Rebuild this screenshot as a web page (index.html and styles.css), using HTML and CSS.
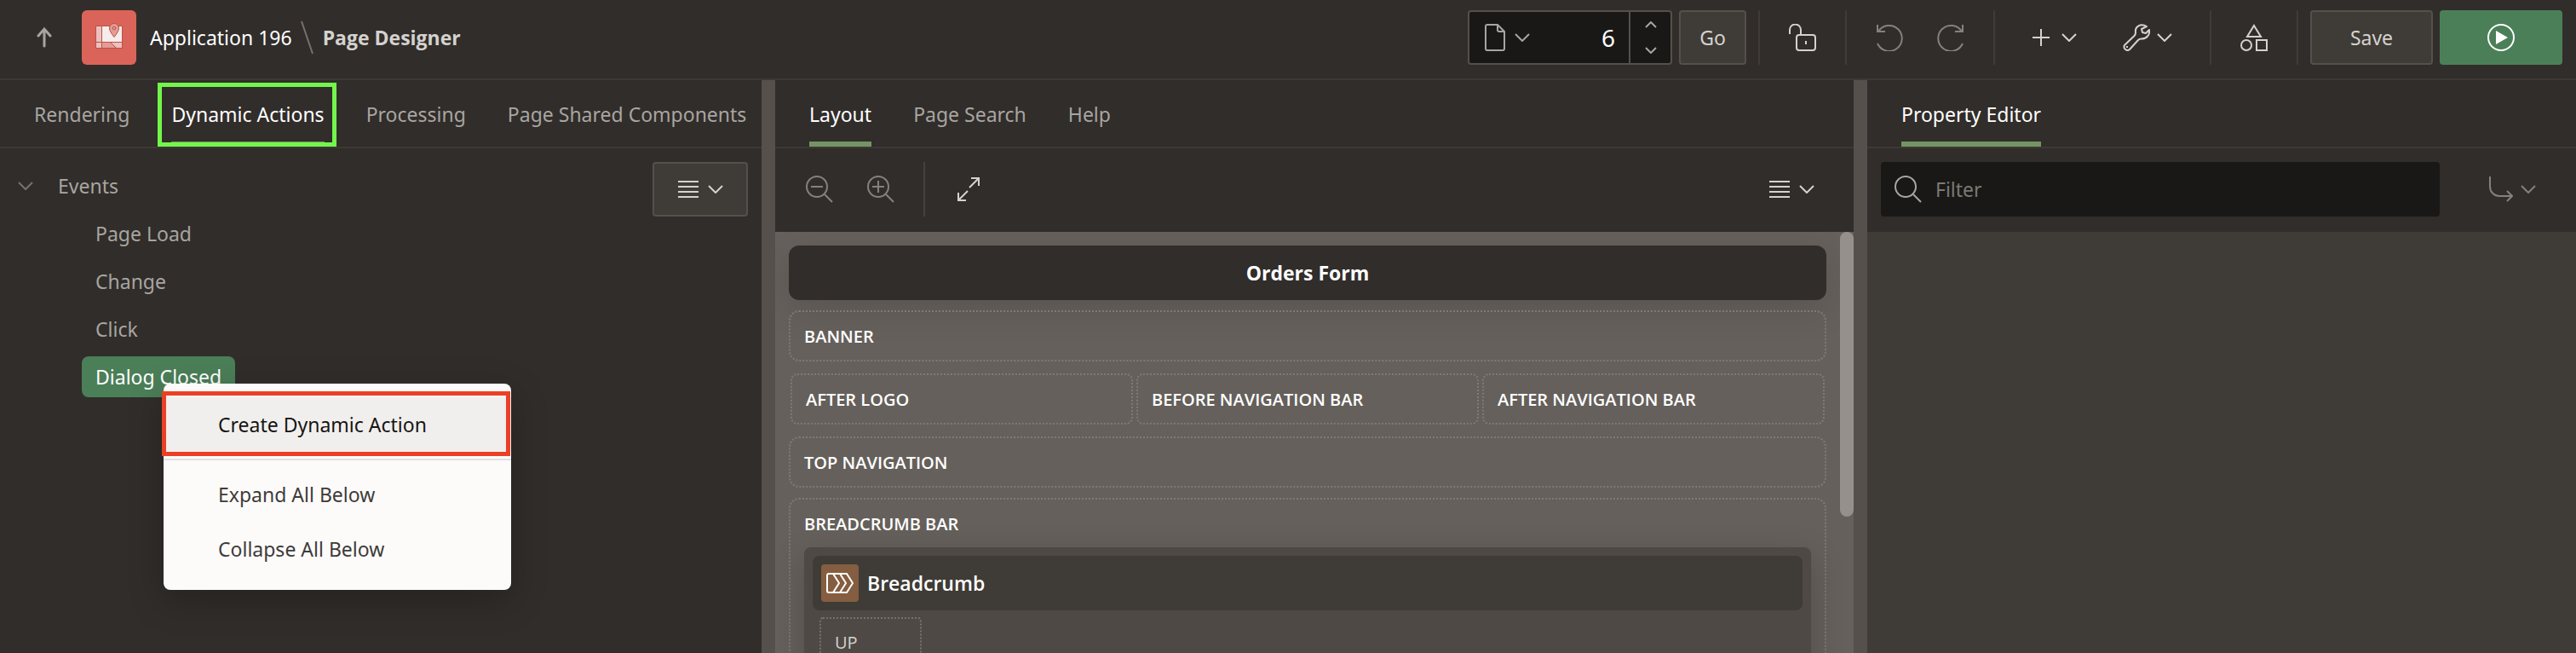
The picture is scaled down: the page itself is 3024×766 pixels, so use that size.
FILE: index.html
```html
<!DOCTYPE html>
<html lang="en">
<head>
<meta charset="utf-8">
<title>Page Designer</title>
<link rel="stylesheet" href="styles.css">
</head>
<body>
<svg class="defs" width="0" height="0" aria-hidden="true">
  <symbol id="chev" viewBox="0 0 18 10"><path d="M1 1l8 8 8-8"/></symbol>
  <symbol id="chev-s" viewBox="0 0 14 8"><path d="M1 1l6 6 6-6"/></symbol>
  <symbol id="chev-up" viewBox="0 0 14 8"><path d="M1 7l6-6 6 6"/></symbol>
  <symbol id="lines" viewBox="0 0 24 20"><path d="M0 1h24M0 7h24M0 13h24M0 19h24"/></symbol>
</svg>

<header class="topbar">
  <nav class="crumbs" aria-label="Breadcrumb">
    <a class="up" href="#" aria-label="Up"><svg class="ic" width="18" height="24" viewBox="0 0 18 24"><path class="bold" d="M9 22V2M2 10l7-8 7 8" stroke-linecap="round"/></svg></a>
    <a class="app" href="#">
      <svg class="app-icon" width="64" height="64" viewBox="0 0 64 64">
        <rect width="64" height="64" rx="6" fill="#da645a"/>
        <rect x="17" y="19" width="30" height="26" fill="#f6eceb"/>
        <rect x="17" y="19" width="6" height="26" fill="#ecc1bd"/>
        <rect x="17" y="38" width="31" height="6" fill="#e39c95"/>
        <path d="M17 38h6v6h-6zM34 38h13v6h-6z" fill="#ecc1bd"/>
        <path d="M17 18.500h30.500v26H16.500v-26zM23.500 18.500v26M16.500 37.500h31M34 38l6 6" fill="none" stroke="#ba524a"/>
        <path d="M38 31.500c-3.500-4.500-5.500-7.500-5.500-10.500a5.500 5.500 0 0 1 11 0c0 3-2 6-5.500 10.500z" fill="#e39c95" stroke="#ba524a"/>
        <circle cx="38" cy="21" r="1.800" fill="none" stroke="#ba524a"/>
      </svg>
      <span>Application 196</span>
    </a>
    <svg class="slash" width="16" height="40" viewBox="0 0 16 40"><path d="M1 1l13 38" stroke-width="2"/></svg>
    <strong class="current">Page Designer</strong>
  </nav>

  <div class="tools">
    <div class="page-pick">
      <button class="file" aria-label="Page list">
        <svg class="ic" width="24" height="32" viewBox="0 0 24 32"><path d="M3 1h12l8 8v20a2 2 0 0 1-2 2H3a2 2 0 0 1-2-2V3a2 2 0 0 1 2-2zM15 1v6a2 2 0 0 0 2 2h6"/></svg>
        <svg class="ic" width="18" height="10"><use href="#chev"/></svg>
      </button>
      <input class="page-no" type="text" value="6" aria-label="Page number">
      <span class="spin">
        <button aria-label="Next page"><svg class="ic" width="14" height="8"><use href="#chev-up"/></svg></button>
        <button aria-label="Previous page"><svg class="ic" width="14" height="8"><use href="#chev-s"/></svg></button>
      </span>
    </div>
    <button class="btn go">Go</button>
    <span class="group"><button class="tool" aria-label="Lock"><svg class="ic" width="32" height="32" viewBox="0 0 32 32"><path d="M1 12V7a6 6 0 0 1 13 0v6"/><rect x="9" y="13" width="22" height="18" rx="3"/><path d="M20 20v4"/></svg></button></span>
    <span class="group dim undo"><button class="tool" aria-label="Undo"><svg class="ic" width="32" height="32" viewBox="0 0 32 32"><path d="M1 1v8h9M2 9A15 15 0 1 1 1 23"/></svg></button>
      <button class="tool" aria-label="Redo"><svg class="ic" width="32" height="32" viewBox="0 0 32 32"><path d="M31 1v8h-9M30 9A15 15 0 1 0 31 23"/></svg></button></span>
    <span class="group make">
      <button class="tool add" aria-label="Create"><svg class="ic" width="20" height="20" viewBox="0 0 20 20"><path d="M10 0v20M0 10h20"/></svg><svg class="ic" width="18" height="10"><use href="#chev"/></svg></button>
      <button class="tool util" aria-label="Utilities"><svg class="ic" width="32" height="32" viewBox="0 0 32 32"><path d="M28 3C21-1 14 3 15 10c0 2-.5 3-1.500 4L2 25a4 4 0 0 0 6 5L18 19c1-1 2-1.500 4-1.500C28 17.500 32 13 31 7l-4 4-4-1-1-4z" stroke-linejoin="round"/><path d="M5 26v2"/></svg><svg class="ic" width="18" height="10"><use href="#chev"/></svg></button>
    </span>
    <span class="group"><button class="tool" aria-label="Shared components"><svg class="ic" width="32" height="32" viewBox="0 0 32 32"><path d="M16 2l8 13H8z"/><circle cx="7" cy="25" r="6"/><rect x="19" y="19" width="12" height="12"/></svg></button></span>
    <span class="group last"><button class="btn wide">Save</button>
      <button class="btn wide run" aria-label="Save and run"><svg class="ic" width="32" height="32" viewBox="0 0 32 32"><circle cx="16" cy="16" r="15"/><path d="M10 8l14 8-14 8z" fill="currentColor" stroke="none"/></svg></button></span>
  </div>
</header>

<main class="panes">
  <section class="pane">
    <nav class="tabs">
      <a href="#">Rendering</a><a class="on marked" href="#">Dynamic Actions</a><a href="#">Processing</a><a href="#">Page Shared Components</a>
    </nav>
    <div class="tree-wrap">
      <ul class="tree">
        <li class="root"><svg class="ic" width="18" height="10"><use href="#chev"/></svg><span>Events</span></li>
        <li><span class="node">Page Load</span></li>
        <li><span class="node">Change</span></li>
        <li><span class="node">Click</span></li>
        <li><span class="node sel">Dialog Closed</span>
          <div class="menu" role="menu">
            <button class="hot" role="menuitem">Create Dynamic Action</button>
            <hr>
            <button role="menuitem">Expand All Below</button>
            <button role="menuitem">Collapse All Below</button>
          </div>
        </li>
      </ul>
      <button class="btn tree-menu" aria-label="Tree menu"><svg class="ic" width="24" height="20"><use href="#lines"/></svg><svg class="ic" width="18" height="10"><use href="#chev"/></svg></button>
    </div>
  </section>

  <div class="splitter"></div>

  <section class="pane">
    <nav class="tabs"><a class="on" href="#">Layout</a><a href="#">Page Search</a><a href="#">Help</a></nav>
    <div class="bar layout-bar">
      <span class="zooms">
        <button class="tool" aria-label="Zoom out"><svg class="ic" width="32" height="32" viewBox="0 0 32 32"><circle cx="13" cy="13" r="12"/><path d="M22 22l9 9M6 13h14"/></svg></button>
        <button class="tool" aria-label="Zoom in"><svg class="ic" width="32" height="32" viewBox="0 0 32 32"><circle cx="13" cy="13" r="12"/><path d="M22 22l9 9M6 13h14M13 6v14"/></svg></button>
      </span>
      <button class="tool expand" aria-label="Expand"><svg class="ic" width="26" height="28" viewBox="0 0 26 28"><path d="M16 1h9v9M25 1L14 12M1 18v9h9M1 27l11-11"/></svg></button>
      <button class="tool layout-menu" aria-label="Layout menu"><svg class="ic" width="24" height="20"><use href="#lines"/></svg><svg class="ic" width="18" height="10"><use href="#chev"/></svg></button>
    </div>
    <div class="canvas">
      <div class="slots">
        <h1 class="page-title">Orders Form</h1>
        <div class="slot">BANNER</div>
        <div class="slot-row"><div class="slot">AFTER LOGO</div><div class="slot">BEFORE NAVIGATION BAR</div><div class="slot">AFTER NAVIGATION BAR</div></div>
        <div class="slot">TOP NAVIGATION</div>
        <div class="slot tall">BREADCRUMB BAR
          <div class="region">
            <div class="region-head">
              <svg width="44" height="44" viewBox="0 0 44 44"><rect width="44" height="44" rx="4" fill="#855d40"/><path d="M9 11h21l7 11-7 11H9a2 2 0 0 1-2-2V13a2 2 0 0 1 2-2M14 11l7 11-7 11M22 11l7 11-7 11" fill="none" stroke="#fff" stroke-width="2"/></svg>
              <span>Breadcrumb</span>
            </div>
            <div class="up-slot">UP</div>
          </div>
        </div>
      </div>
      <div class="scrollbar"></div>
    </div>
  </section>

  <div class="splitter"></div>

  <section class="pane props">
    <nav class="tabs"><a class="on" href="#">Property Editor</a></nav>
    <div class="bar prop-bar">
      <label class="filter"><svg class="ic" width="32" height="32" viewBox="0 0 32 32"><circle cx="13" cy="13" r="12"/><path d="M22 22l9 9"/></svg><input type="text" placeholder="Filter" aria-label="Filter"></label>
      <button class="tool goto" aria-label="Go to group"><svg class="ic" width="28" height="30" viewBox="0 0 28 30"><path d="M1 0v12a11 11 0 0 0 11 11h15M21 17l6 6-6 6"/></svg><svg class="ic" width="18" height="10"><use href="#chev"/></svg></button>
    </div>
  </section>
</main>
</body>
</html>
```
FILE: styles.css
```css
* { box-sizing: border-box; }
body {
  margin: 0;
  height: 100vh;
  display: flex;
  flex-direction: column;
  overflow: hidden;
  background: #312d2a;
  color: #a8a5a1;
  font: 23px/32px "Noto Sans", "Open Sans", sans-serif;
}
button, input { font: inherit; color: inherit; margin: 0; padding: 0; border: 0; background: none; }
a { color: inherit; text-decoration: none; }
.defs { position: absolute; }
svg { display: block; flex: none; }
.ic, .slash { fill: none; stroke: currentColor; }
.ic { stroke-width: 2; }
.bold { stroke-width: 3; }

/* Header */
.topbar {
  display: flex;
  justify-content: space-between;
  flex: none;
  padding: 12px 16px 16px 43px;
  border-bottom: 2px solid #3d3935;
}
.crumbs { display: flex; align-items: center; height: 64px; }
.up { margin-right: 35px; }
.app { display: flex; align-items: center; gap: 16px; color: #fff; }
.slash { margin: 0 10px; color: #76726e; }
.current { font-family: "Open Sans", sans-serif; font-weight: 700; color: #d4d2cf; }

.tools { display: flex; height: 64px; color: #d4d2cf; }
.page-pick {
  display: flex;
  width: 240px;
  background: #191816;
  border: 2px solid #55504b;
  border-radius: 4px;
}
.file { display: flex; align-items: center; gap: 11px; padding-left: 18px; color: #a8a5a1; }
.page-no { flex: 1; min-width: 0; text-align: right; padding-right: 16px; color: #fff; font-size: 28px; }
.spin { width: 49px; display: flex; flex-direction: column; border-left: 2px solid #55504b; color: #a8a5a1; }
.spin button { flex: 1; display: grid; place-items: center; }
.btn {
  display: flex;
  align-items: center;
  justify-content: center;
  background: #3f3b36;
  border: 2px solid #55504b;
  border-radius: 4px;
  color: #d4d2cf;
}
.go { width: 79px; margin: 0 14px 0 8px; }
.group { display: flex; align-items: center; padding: 0 34px; border-left: 2px solid #3f3b36; }
.tool { display: flex; align-items: center; }
.dim, .zooms { color: #85817c; }
.undo { gap: 38px; padding: 0 35px; }
.make { gap: 54px; padding: 0 44px; }
.add { gap: 14px; }
.util { gap: 8px; }
.last { gap: 8px; padding: 0 0 0 14px; }
.wide { width: 144px; height: 64px; }
.run { background: #4b7f58; border-color: #4b7f58; color: #fff; }

/* Panes */
.panes {
  flex: 1;
  min-height: 0;
  display: grid;
  grid-template-columns: minmax(0, 894fr) 16px minmax(0, 1266fr) 16px minmax(0, 832fr);
}
.pane { display: flex; flex-direction: column; min-height: 0; }
.splitter { background: #55504b; }
.tabs { display: flex; gap: 49px; padding: 0 40px; height: 80px; flex: none; border-bottom: 2px solid #3d3935; white-space: nowrap; }
.tabs a { position: relative; padding: 24px 0 16px; border-bottom: 6px solid transparent; }
.tabs .on { color: #fff; border-color: #759465; }
.marked::after {
  content: "";
  position: absolute;
  inset: 3px -14px -6px -16px;
  border: 5px solid #73f64b;
}
.bar { display: flex; align-items: center; height: 98px; padding: 16px 0 18px; flex: none; }

/* Tree */
.tree-wrap { display: flex; align-items: flex-start; justify-content: space-between; padding: 16px 16px 0 20px; }
.tree { list-style: none; margin: 0; padding: 0; }
.tree li { position: relative; height: 56px; padding-left: 76px; display: flex; align-items: center; }
.tree .root { gap: 29px; padding-left: 1px; }
.root .ic { color: #76726e; }
.node { padding: 8px 16px; border-radius: 8px; white-space: nowrap; }
.sel { background: #4b7f58; color: #fff; }
.tree-menu { width: 112px; height: 64px; gap: 11px; }
.menu {
  position: absolute;
  z-index: 1;
  left: 172px;
  top: 36px;
  width: 408px;
  padding: 16px 0;
  background: #fcfbfa;
  border-radius: 8px;
  box-shadow: 0 12px 40px rgba(0, 0, 0, .25);
}
.menu button { position: relative; display: block; width: 100%; padding: 16px 64px; text-align: left; color: #3f3b39; }
.menu .hot { background: #f1efed; color: #161513; }
.hot::after { content: ""; position: absolute; inset: -7px 1px -5px -2px; border: 5px solid #eb4026; }
.menu hr { margin: 8px 0; border: 0; border-top: 2px solid #e2e0de; }

/* Layout canvas */
.layout-bar { padding-left: 36px; padding-right: 46px; }
.zooms { display: flex; align-items: center; gap: 40px; height: 64px; padding-right: 34px; border-right: 2px solid #45413d; }
.expand { margin-left: 38px; color: #d4d2cf; }
.layout-menu { margin-left: auto; gap: 11px; color: #d4d2cf; }
.canvas { flex: 1; min-height: 0; display: flex; background: #65605b; overflow: hidden; }
.slots {
  flex: 1;
  display: flex;
  flex-direction: column;
  padding: 16px 16px 0;
  color: #fff;
  font: 600 20px/28px "Open Sans", "Noto Sans", sans-serif;
}
.page-title {
  flex: none;
  margin: 0 0 12px;
  padding: 16px;
  text-align: center;
  font-size: 23px;
  font-weight: 700;
  line-height: 32px;
  background: #312d2a;
  border-radius: 12px;
  box-shadow: 0 12px 40px rgba(0, 0, 0, .12);
}
.slot { flex: none; height: 60px; padding: 15px 16px; border: 2px dotted #7f7a76; border-radius: 12px; }
.slot-row { flex: none; display: grid; grid-template-columns: repeat(3, 1fr); gap: 4px; padding: 14px 2px; }
.slot-row .slot { border-radius: 8px; }
.tall { height: 400px; margin-top: 12px; }
.region { height: 300px; margin-top: 13px; padding: 10px; background: #4e4945; border-radius: 8px; box-shadow: 0 12px 40px rgba(0, 0, 0, .2); }
.region-head { display: flex; align-items: center; gap: 10px; padding: 10px; font-size: 23px; line-height: 32px; background: #3f3b36; border-radius: 8px; }
.up-slot { width: 120px; height: 80px; margin: 8px; padding: 18px 16px; border: 2px dotted #76726e; border-radius: 4px; font-weight: 400; line-height: 20px; color: #d4d2cf; }
.scrollbar { width: 16px; height: 334px; background: #95908c; border-radius: 8px; }

/* Property editor */
.props { background: #3f3b36; }
.props .tabs, .prop-bar { background: #312d2a; }
.prop-bar { padding-left: 16px; padding-right: 47px; gap: 58px; }
.filter { flex: 1; display: flex; align-items: center; gap: 16px; height: 64px; padding: 0 16px; background: #191816; border-radius: 4px; }
.filter input { flex: 1; min-width: 0; outline: 0; }
.filter input::placeholder { color: #7c7975; opacity: 1; }
.goto { gap: 9px; color: #85817c; }
```
